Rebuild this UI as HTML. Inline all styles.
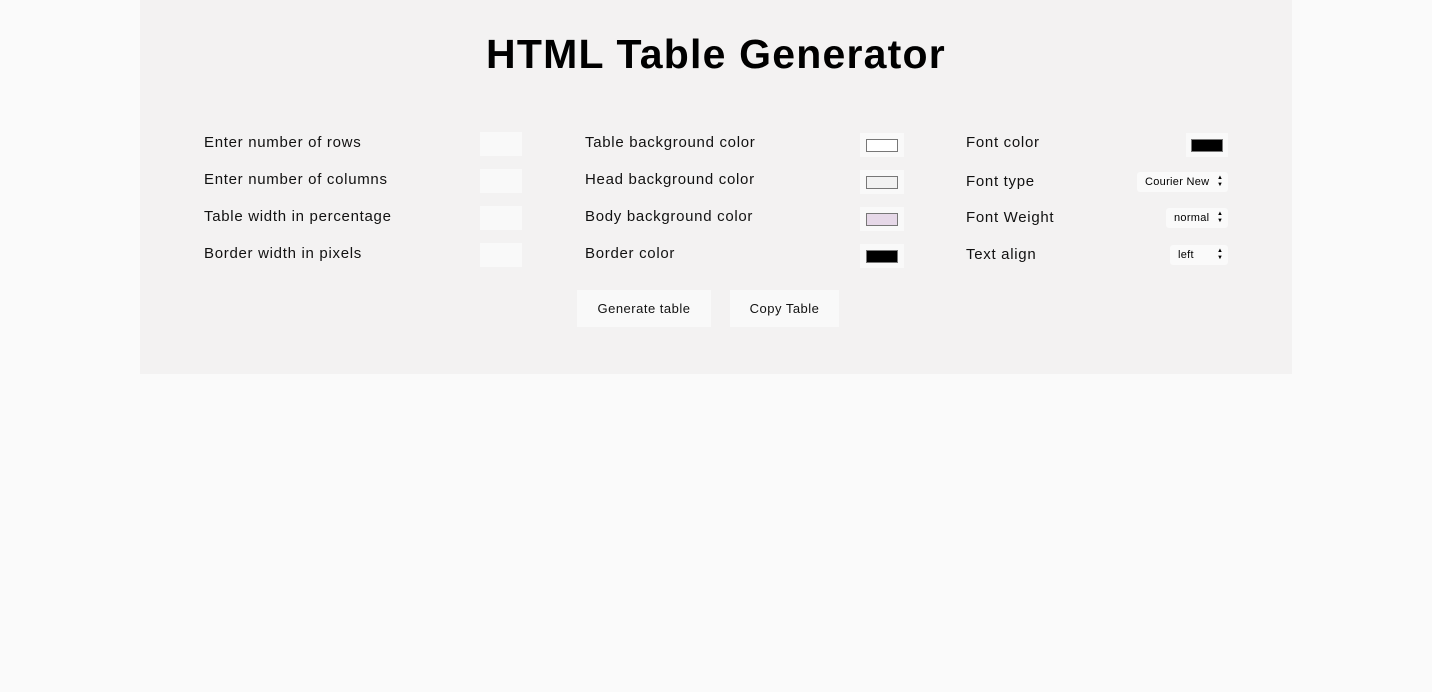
<!DOCTYPE html>
<html><head><style>
body{margin:0;width:1432px;height:692px;background:#fafafa;font-family:"Liberation Sans",sans-serif;position:relative;overflow:hidden}
.panel{position:absolute;left:140px;top:0;width:1152px;height:374px;background:#f3f2f2}
h1{position:absolute;left:0;width:1432px;top:31px;margin:0;text-align:center;font-size:41px;font-weight:bold;color:#000;letter-spacing:1.2px}
.l{position:absolute;font-size:15px;color:#111;line-height:18px;letter-spacing:0.7px}
.in{position:absolute;width:42px;height:24px;background:#f9f9f9}
.sw{position:absolute;width:44px;height:24px;background:#f9f9f9}
.sw i{position:absolute;left:6px;top:6px;width:30px;height:11px;border:1px solid #777}
.sel{position:absolute;height:20px;background:#fafafa;font-size:11px;line-height:20px;color:#000;border-radius:3px;box-sizing:border-box;padding-left:8px;letter-spacing:0.3px}
.sel b{position:absolute;right:5px;top:3px;font-size:6px;font-weight:normal;line-height:7px;letter-spacing:0}
.btn{position:absolute;top:290px;height:37px;background:#f9f9f9;font-size:13px;line-height:37px;text-align:center;color:#111;letter-spacing:0.5px}
</style></head><body>
<div class="panel"></div>
<h1>HTML Table Generator</h1>
<div class="l" style="left:204px;top:134px">Enter number of rows</div>
<div class="l" style="left:204px;top:171px">Enter number of columns</div>
<div class="l" style="left:204px;top:208px">Table width in percentage</div>
<div class="l" style="left:204px;top:245px">Border width in pixels</div>
<div class="in" style="left:480px;top:132px"></div>
<div class="in" style="left:480px;top:169px"></div>
<div class="in" style="left:480px;top:206px"></div>
<div class="in" style="left:480px;top:243px"></div>
<div class="l" style="left:585px;top:134px">Table background color</div>
<div class="l" style="left:585px;top:171px">Head background color</div>
<div class="l" style="left:585px;top:208px">Body background color</div>
<div class="l" style="left:585px;top:245px">Border color</div>
<div class="sw" style="left:860px;top:133px"><i style="background:#fff"></i></div>
<div class="sw" style="left:860px;top:170px"><i style="background:#f2f2f2"></i></div>
<div class="sw" style="left:860px;top:207px"><i style="background:#e6d8e8"></i></div>
<div class="sw" style="left:860px;top:244px"><i style="background:#000"></i></div>
<div class="l" style="left:966px;top:134px">Font color</div>
<div class="l" style="left:966px;top:173px">Font type</div>
<div class="l" style="left:966px;top:209px">Font Weight</div>
<div class="l" style="left:966px;top:246px">Text align</div>
<div class="sw" style="left:1186px;top:133px;width:42px"><i style="background:#000;left:5px"></i></div>
<div class="sel" style="left:1137px;top:172px;width:91px">Courier New<b>▲<br>▼</b></div>
<div class="sel" style="left:1166px;top:208px;width:62px">normal<b>▲<br>▼</b></div>
<div class="sel" style="left:1170px;top:245px;width:58px">left<b>▲<br>▼</b></div>
<div class="btn" style="left:577px;width:134px">Generate table</div>
<div class="btn" style="left:730px;width:109px">Copy Table</div>
</body></html>
